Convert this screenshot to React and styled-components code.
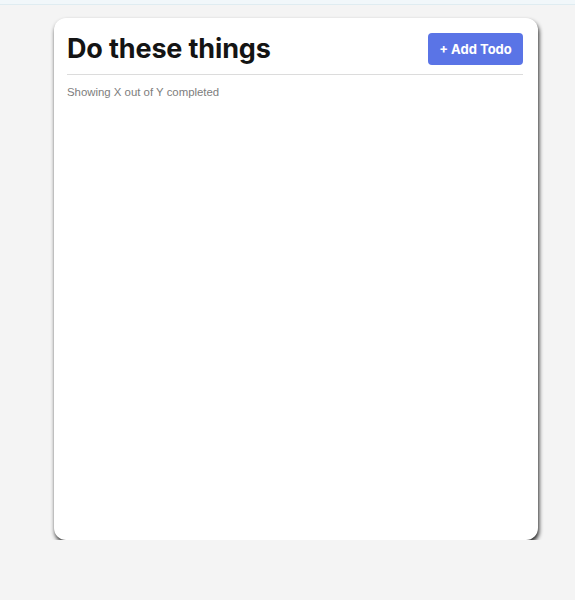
import React from "react";
import styled, { createGlobalStyle } from "styled-components";

const GlobalStyle = createGlobalStyle`
  html, body {
    margin: 0;
    padding: 0;
    background: #f4f4f4;
    font-family: Inter, "Noto Sans", sans-serif;
  }
`;

const TopBar = styled.div`
  height: 4px;
  background: #f1f7fa;
  border-bottom: 1px solid #dfecf1;
`;

const Card = styled.div`
  width: 484px;
  height: 522px;
  margin: 13px 0 0 54px;
  background: #fff;
  border-radius: 12px;
  box-shadow: 1px 3px 4px rgba(0, 0, 0, 0.85);
  padding: 0 15px 0 13px;
  box-sizing: border-box;
`;

const Header = styled.div`
  display: flex;
  align-items: center;
  justify-content: space-between;
  padding: 15px 0 9px;
  border-bottom: 1px solid #dcdcdc;
`;

const Title = styled.h1`
  margin: 0;
  font-size: 27px;
  line-height: 32px;
  font-weight: 700;
  color: #141414;
  letter-spacing: -0.15px;
`;

const AddButton = styled.button`
  width: 95px;
  height: 32px;
  border: none;
  border-radius: 4px;
  background: #5a74e6;
  color: #fff;
  font-family: inherit;
  font-size: 13px;
  font-weight: 700;
  cursor: pointer;
`;

const Status = styled.p`
  margin: 11px 0 0;
  font-family: "Liberation Sans", Arial, sans-serif;
  font-size: 11.4px;
  line-height: 13px;
  color: #7d7d7d;
`;

export default function App() {
  return (
    <>
      <GlobalStyle />
      <TopBar />
      <Card>
        <Header>
          <Title>Do these things</Title>
          <AddButton>+ Add Todo</AddButton>
        </Header>
        <Status>Showing X out of Y completed</Status>
      </Card>
    </>
  );
}
